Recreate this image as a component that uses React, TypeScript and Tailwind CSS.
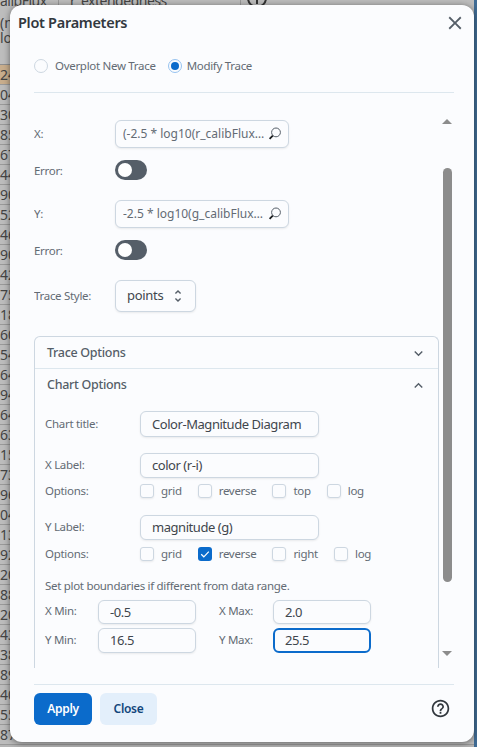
const rowNums = ["24","04","30","85","67","44","90","52","46","90","42","75","18","60","54","64","94","64","63","15","73","96","04","13","92","20","88","20","43","38","89","40","55","87"];

const inputCls = "h-full w-full rounded-md border border-[#cdd7e1] bg-[#fbfcfe] shadow-[0_1px_2px_rgba(21,21,21,0.08)] text-[#3f464d] outline-none";

const Field = ({ value, className }: { value: string; className: string }) => (
  <div className={className}>
    <input readOnly value={value} className={inputCls + " px-[11px] text-[13px] tracking-[-0.45px]"} />
  </div>
);

const Search = ({ value }: { value: string }) => (
  <div className="flex h-[28px] w-[174px] items-center rounded-md border border-[#cdd7e1] bg-[#fbfcfe] pl-[7px] pr-[5px] tracking-normal shadow-[0_1px_2px_rgba(21,21,21,0.08)]">
    <span className="flex-1 truncate text-[12px] text-[#636b74]">{value}</span>
    <svg viewBox="0 0 16 16" className="ml-[2px] h-[16px] w-[16px] shrink-0" fill="none">
      <circle cx="9" cy="6.4" r="4.4" stroke="#555e68" strokeWidth="1" />
      <path d="M5.8 9.6 2.6 12.8" stroke="#171a1c" strokeWidth="1.8" />
    </svg>
  </div>
);

const Toggle = () => (
  <div className="flex h-[20px] w-[32px] items-center rounded-full bg-[#555e68] pl-[3px]">
    <div className="h-[14px] w-[14px] rounded-full bg-white" />
  </div>
);

const Label = ({ text, className }: { text: string; className: string }) => (
  <div className={"shrink-0 text-[11.5px] text-[#636b74] " + className}>{text}</div>
);

const Check = ({ label, checked }: { label: string; checked?: boolean }) => (
  <div className="flex items-center gap-[7px]">
    {checked ? (
      <div className="flex h-[14px] w-[14px] items-center justify-center rounded-[3px] bg-[#0b6bcb]">
        <svg viewBox="0 0 14 14" className="h-[14px] w-[14px]" fill="none">
          <path d="M3.2 7.3 5.8 9.8 10.8 4.6" stroke="#fff" strokeWidth="1.2" />
        </svg>
      </div>
    ) : (
      <div className="h-[14px] w-[14px] rounded-[3px] border border-[#cdd7e1] bg-[#fbfcfe] shadow-[0_1px_2px_rgba(21,21,21,0.08)]" />
    )}
    <span className="text-[11.5px] text-[#636b74]">{label}</span>
  </div>
);

const Chevron = ({ d }: { d: string }) => (
  <svg viewBox="0 0 24 24" className="h-[17px] w-[17px]" fill="#555e68">
    <path d={d} />
  </svg>
);

const DOWN = "M7.41 8.59 12 13.17l4.59-4.58L18 10l-6 6-6-6 1.41-1.41z";
const UP = "M7.41 15.41 12 10.83l4.59 4.58L18 14l-6-6-6 6z";

const App = () => {
  return (
    <div className="relative h-[747px] w-[477px] overflow-hidden bg-[#b4b4b4] font-['Noto_Sans',sans-serif]">
      {/* Table behind the dialog */}
      <div className="flex h-[65px] flex-col border-b border-[#8f8f8f] bg-[#bdbdbd] text-[14px] leading-[15px] text-[#444]">
        <div className="flex h-[8px] items-end overflow-hidden">
          <span className="h-[15px] w-[59px] shrink-0 border-r border-[#999] tracking-[-0.5px]">alibFlux</span>
          <span className="h-[15px] w-[102px] shrink-0 border-r border-[#999] pl-[11px] tracking-[-0.5px]">r_extendedness</span>
          <span className="h-[15px] w-[80px] shrink-0 border-r border-[#999]" />
          <svg viewBox="0 0 20 20" className="ml-[6px] h-[20px] w-[20px] shrink-0" fill="none" stroke="#333" strokeWidth="2">
            <circle cx="10" cy="10" r="9" />
            <path d="M10 4v12M4 10h12" />
          </svg>
        </div>
        <span className="mt-[7px]">(n</span>
        <span>lo</span>
      </div>
      <div className="flex flex-col text-[14px] text-[#444]">
        {rowNums.map((n, i) => (
          <div key={i} className={"h-[20px] border-b border-[#999] leading-[19px] " + (i === 0 ? "bg-[#c8ad8c]" : "bg-[#bcbcbc]")}>
            {n}
          </div>
        ))}
      </div>
      <div className="absolute right-0 top-0 h-full w-[3px] bg-[#3f6b94]" />

      {/* Dialog */}
      <div className="absolute left-[10px] top-[5px] flex h-[737px] w-[464px] flex-col rounded-xl bg-[#fbfcfe] pl-[24px] pr-[20px] tracking-[-0.3px] shadow-[0_1px_6px_rgba(21,21,21,0.55)]">
        <div className="-ml-[16px] -mr-[12px] flex h-[34px] shrink-0 items-center justify-between pt-[1px]">
          <h2 className="text-[14.5px] font-semibold text-[#32383e]">Plot Parameters</h2>
          <svg viewBox="0 0 24 24" className="h-[22px] w-[22px]" fill="#555e68">
            <path d="M19 6.41 17.59 5 12 10.59 6.41 5 5 6.41 10.59 12 5 17.59 6.41 19 12 13.41 17.59 19 19 17.59 13.41 12z" />
          </svg>
        </div>

        <div className="flex h-[54px] shrink-0 items-center gap-[7px] border-b border-[#dde7ee]">
          <div className="flex items-center gap-[7px]">
            <div className="h-[14px] w-[14px] rounded-full border border-[#cdd7e1]" />
            <span className="text-[11.5px] text-[#636b74]">Overplot New Trace</span>
          </div>
          <div className="ml-[5px] flex items-center gap-[5px]">
            <div className="flex h-[14px] w-[14px] items-center justify-center rounded-full border border-[#97c3f0]">
              <div className="h-[8px] w-[8px] rounded-full bg-[#0b6bcb]" />
            </div>
            <span className="text-[11.5px] text-[#636b74]">Modify Trace</span>
          </div>
        </div>

        {/* Scrolling body */}
        <div className="flex h-[575px] shrink-0 overflow-hidden">
          <div className="w-[405px] shrink-0 pt-[27px]">
            <div className="flex items-center">
              <Label text="X:" className="w-[81px]" />
              <Search value="(-2.5 * log10(r_calibFlux) + 31.4) - (-2.5 * log10(i_calibFlux) + 31.4)" />
            </div>
            <div className="mt-[12px] flex items-center">
              <Label text="Error:" className="w-[81px] pt-[1px]" />
              <Toggle />
            </div>
            <div className="mt-[20px] flex items-center">
              <Label text="Y:" className="w-[81px]" />
              <Search value="-2.5 * log10(g_calibFlux) + 31.4" />
            </div>
            <div className="mt-[12px] flex items-center">
              <Label text="Error:" className="w-[81px] pt-[1px]" />
              <Toggle />
            </div>
            <div className="mt-[20px] flex items-center">
              <Label text="Trace Style:" className="w-[81px]" />
              <div className="flex h-[32px] w-[81px] items-center justify-between rounded-md border border-[#cdd7e1] bg-[#fbfcfe] pl-[11px] pr-[9px] text-[13px] text-[#3f464d] shadow-[0_1px_2px_rgba(21,21,21,0.08)]">
                points
                <svg viewBox="0 0 24 24" className="h-[16px] w-[16px]" fill="#555e68">
                  <path d="M12 5.83 15.17 9l1.41-1.41L12 3 7.41 7.59 8.83 9zm0 12.34L8.83 15l-1.41 1.41L12 21l4.59-4.59L15.17 15z" />
                </svg>
              </div>
            </div>

            {/* Accordion */}
            <div className="mt-[24px] h-[340px] rounded-t-md border-x border-t border-[#cdd7e1]">
              <div className="flex h-[32px] items-center justify-between border-b border-[#dde7ee] pl-[12px] pr-[11px] pt-[1px]">
                <span className="text-[12.5px] font-medium text-[#555e68]">Trace Options</span>
                <Chevron d={DOWN} />
              </div>
              <div className="flex h-[32px] items-center justify-between pl-[12px] pr-[11px]">
                <span className="text-[12.5px] font-medium text-[#555e68]">Chart Options</span>
                <Chevron d={UP} />
              </div>
              <div className="pl-[10px] pt-[10px]">
                <div className="flex h-[26px] items-center">
                  <Label text="Chart title:" className="w-[95px]" />
                  <Field value="Color-Magnitude Diagram" className="h-full w-[179px]" />
                </div>
                <div className="mt-[15px] flex h-[25px] items-center">
                  <Label text="X Label:" className="w-[95px]" />
                  <Field value="color (r-i)" className="h-full w-[179px]" />
                </div>
                <div className="mt-[6px] flex h-[16px] items-center">
                  <Label text="Options:" className="w-[95px]" />
                  <div className="flex gap-[16px]">
                    <Check label="grid" />
                    <Check label="reverse" />
                    <Check label="top" />
                    <Check label="log" />
                  </div>
                </div>
                <div className="mt-[15px] flex h-[25px] items-center">
                  <Label text="Y Label:" className="w-[95px]" />
                  <Field value="magnitude (g)" className="h-full w-[179px]" />
                </div>
                <div className="mt-[7px] flex h-[16px] items-center">
                  <Label text="Options:" className="w-[95px]" />
                  <div className="flex gap-[16px]">
                    <Check label="grid" />
                    <Check label="reverse" checked />
                    <Check label="right" />
                    <Check label="log" />
                  </div>
                </div>
                <div className="mt-[16px] text-[11.5px] leading-[16px] text-[#636b74]">
                  Set plot boundaries if different from data range.
                </div>
                <div className="mt-[5px] flex h-[24px] items-center">
                  <Label text="X Min:" className="w-[53px]" />
                  <Field value="-0.5" className="h-full w-[98px]" />
                  <Label text="X Max:" className="ml-[23px] w-[54px]" />
                  <Field value="2.0" className="h-full w-[98px]" />
                </div>
                <div className="mt-[4px] flex h-[25px] items-center">
                  <Label text="Y Min:" className="w-[53px]" />
                  <Field value="16.5" className="h-full w-[98px]" />
                  <Label text="Y Max:" className="ml-[23px] w-[54px]" />
                  <div className="h-full w-[98px]">
                    <input readOnly value="25.5" className="h-full w-full rounded-md border-2 border-[#0b6bcb] bg-[#fbfcfe] px-[10px] text-[13px] tracking-[-0.45px] text-[#3f464d] outline-none" />
                  </div>
                </div>
              </div>
            </div>
          </div>

          {/* Scrollbar */}
          <div className="ml-[3px] flex w-[10px] shrink-0 flex-col items-center pt-[26px]">
            <div className="h-0 w-0 border-x-[5px] border-b-[5px] border-x-transparent border-b-[#8c8c8c]" />
            <div className="mt-[44px] h-[414px] w-[9px] shrink-0 rounded-full bg-[#8c8c8c]" />
            <div className="mt-[69px] h-0 w-0 border-x-[5px] border-t-[5px] border-x-transparent border-t-[#8c8c8c]" />
          </div>
        </div>

        {/* Footer */}
        <div className="mt-[16px] flex h-[58px] shrink-0 items-start justify-between border-t border-[#dde7ee] pt-[8px]">
          <div className="flex gap-[8px]">
            <button className="h-[32px] w-[58px] rounded-md bg-[#0b6bcb] text-[12px] font-semibold text-white">Apply</button>
            <button className="h-[32px] w-[57px] rounded-md bg-[#e3effb] text-[12px] font-semibold text-[#12467b]">Close</button>
          </div>
          <svg viewBox="0 0 24 24" className="mr-[3px] mt-[5px] h-[21px] w-[21px]" fill="#32383e">
            <path d="M11 18h2v-2h-2v2zm1-16C6.48 2 2 6.48 2 12s4.48 10 10 10 10-4.48 10-10S17.52 2 12 2zm0 18c-4.41 0-8-3.59-8-8s3.59-8 8-8 8 3.59 8 8-3.59 8-8 8zm0-14c-2.21 0-4 1.79-4 4h2c0-1.1.9-2 2-2s2 .9 2 2c0 2-3 1.75-3 5h2c0-2.25 3-2.5 3-5 0-2.21-1.79-4-4-4z" />
          </svg>
        </div>
      </div>
    </div>
  );
};

export default App;
